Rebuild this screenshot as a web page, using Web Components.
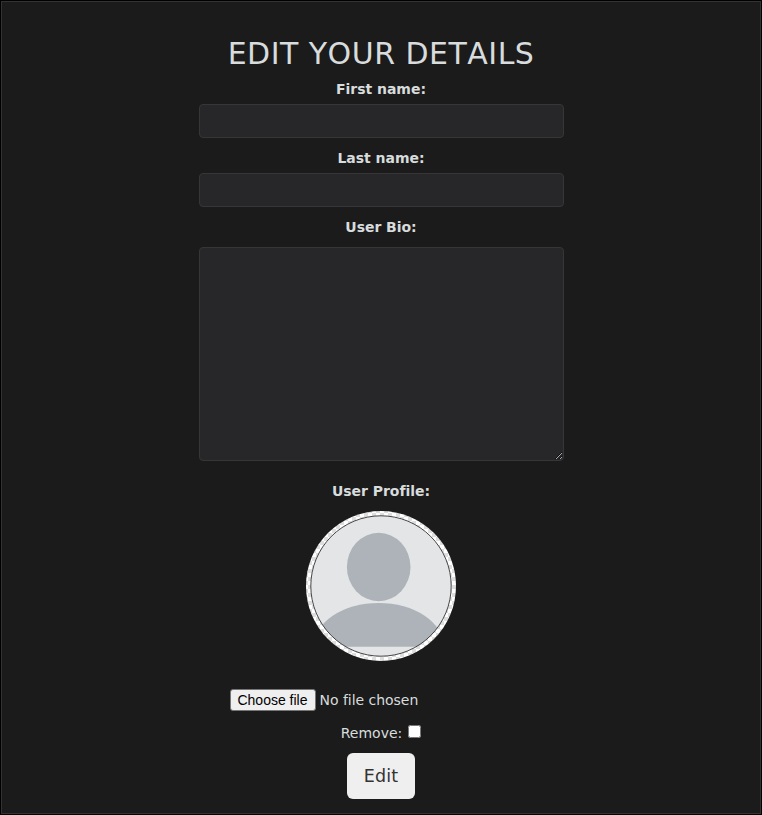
<!DOCTYPE html>
<html lang="en"><head><meta charset="utf-8"><title>Edit your details</title>
<style>
html,body{margin:0;height:100%;background:#000}
body{font-family:"DejaVu Sans",Verdana,sans-serif;color:#d8dcdd;overflow:hidden}
</style></head><body>
<edit-panel>
<panel-title>EDIT YOUR DETAILS</panel-title>
<field-label style="margin-top:5px">First name:</field-label>
<text-field></text-field>
<field-label style="margin-top:10px">Last name:</field-label>
<text-field></text-field>
<field-label style="margin-top:10px">User Bio:</field-label>
<bio-field></bio-field>
<field-label style="margin-top:20px">User Profile:</field-label>
<user-avatar></user-avatar>
<file-picker></file-picker>
<remove-check>Remove:</remove-check>
<edit-button>Edit</edit-button>
</edit-panel>
<script>
const define=(name,html)=>customElements.define(name,class extends HTMLElement{
  constructor(){super();this.attachShadow({mode:'open'}).innerHTML=html;}
});
define('edit-panel',`<style>:host{box-sizing:border-box;display:flex;flex-direction:column;align-items:center;width:760px;height:813px;margin:0 1px;border:1px solid #333;background:#1b1b1b;padding-top:32px;position:relative;top:1px}</style><slot></slot>`);
define('panel-title',`<style>:host{display:block;height:40px;line-height:40px;font-size:30px;font-kerning:none;letter-spacing:.48px;white-space:nowrap}</style><slot></slot>`);
define('field-label',`<style>:host{display:block;height:20px;line-height:20px;font-size:14px;font-weight:bold;letter-spacing:-.03px;white-space:nowrap}</style><slot></slot>`);
define('text-field',`<style>:host{display:block;margin-top:5px;width:365px;height:34px}input{box-sizing:border-box;display:block;width:100%;height:100%;margin:0;border:1px solid #363636;border-radius:4px;background:#272729;color:inherit;padding:6px 12px;font:14px "DejaVu Sans",sans-serif;outline:0}</style><input type="text">`);
define('bio-field',`<style>:host{display:block;margin-top:10px;width:365px;height:214px}textarea{box-sizing:border-box;display:block;width:100%;height:100%;margin:0;border:1px solid #363636;border-radius:4px;background:#272729;color:inherit;padding:6px 12px;outline:0;resize:both}</style><textarea></textarea>`);
define('user-avatar',`<style>:host{display:block;margin-top:10px;width:150px;height:150px}svg{display:block}</style>
<svg width="150" height="150" viewBox="0 0 150 150"><defs>
<pattern id="check" x="2" y="2" width="8" height="8" patternUnits="userSpaceOnUse"><path fill="#fff" d="M0 0h8v8H0z"/><path fill="#dedede" d="M0 0h4v4H0zM4 4h4v4H4z"/></pattern>
<clipPath id="disc"><circle cx="75" cy="75" r="70.2"/></clipPath></defs>
<circle cx="75" cy="75" r="75" fill="url(#check)"/>
<circle cx="75" cy="75" r="70.2" fill="#e3e5e7"/>
<g clip-path="url(#disc)" fill="#adb3b8"><ellipse cx="72.7" cy="56" rx="31.8" ry="34.2"/><path d="M7.7 135.7A65 43.8 0 0 1 137.7 135.7z"/></g>
<circle cx="75" cy="75" r="70.2" fill="none" stroke="#333" stroke-width=".9"/></svg>`);
define('file-picker',`<style>:host{display:flex;align-items:center;gap:4px;box-sizing:border-box;width:302px;height:22px;margin-top:28px;font-size:14px}button{box-sizing:border-box;width:86px;height:22px;margin:0;padding:0 1px 0 0;border:1px solid #767676;border-radius:3px;background:#efefef;color:#000;font:14px "Liberation Sans",sans-serif;white-space:nowrap}span{white-space:nowrap;letter-spacing:-.03px;margin-left:-.5px}</style><button type="button">Choose file</button><span>No file chosen</span>`);
define('remove-check',`<style>:host{display:flex;height:20px;margin-top:12px;line-height:20px;font-size:14px;gap:6px}span{letter-spacing:0}input{width:13px;height:13px;margin:2px 0 0}</style><span><slot></slot></span><input type="checkbox" aria-label="Remove">`);
define('edit-button',`<style>:host{display:block;margin-top:10px}button{box-sizing:border-box;display:block;width:68px;height:46px;padding:1px 0 0;border:0;border-radius:6px;background:#efefef;color:#333;font:17.5px/45px "DejaVu Sans",Verdana,sans-serif;letter-spacing:.2px}</style><button type="button"><slot></slot></button>`);
</script></body></html>
